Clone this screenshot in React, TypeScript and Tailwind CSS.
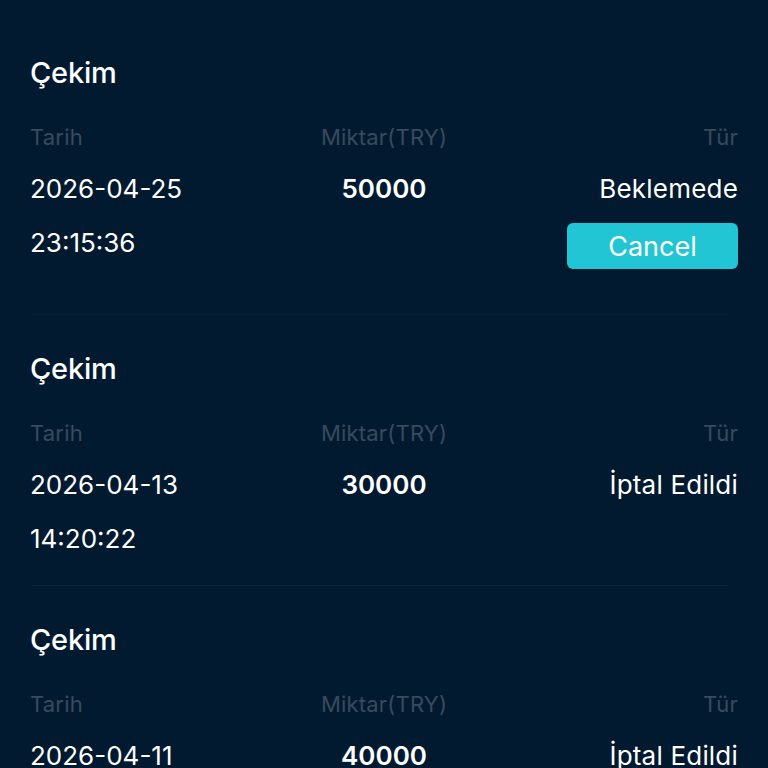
type Item = {
  date: string;
  time: string;
  amount: string;
  status: string;
  cancellable?: boolean;
};

const items: Item[] = [
  { date: '2026-04-25', time: '23:15:36', amount: '50000', status: 'Beklemede', cancellable: true },
  { date: '2026-04-13', time: '14:20:22', amount: '30000', status: 'İptal Edildi' },
  { date: '2026-04-11', time: '09:42:10', amount: '40000', status: 'İptal Edildi' },
];

function WithdrawCard({ item }: { item: Item }) {
  return (
    <div className="pt-[36px]">
      <h2 className="text-[29px] leading-[36px] font-medium text-white tracking-[-0.2px]">Çekim</h2>

      <div className="mt-[31px] grid grid-cols-3 text-[22px] leading-[30px] text-[#384a5d] tracking-[0.2px]">
        <span>Tarih</span>
        <span className="text-center">Miktar(TRY)</span>
        <span className="text-right">Tür</span>
      </div>

      <div className="mt-[21px] grid grid-cols-3 text-[26px] leading-[32px] text-white">
        <div className="flex flex-col gap-[22px]">
          <span>{item.date}</span>
          <span>{item.time}</span>
        </div>
        <span className="text-center font-semibold">{item.amount}</span>
        <div className="flex flex-col items-end">
          <span className="tracking-[0.2px]">{item.status}</span>
          {item.cancellable && (
            <button className="mt-[18px] w-[171px] h-[46px] rounded-[6px] bg-[#22c5d3] text-[27px] leading-none text-white">
              Cancel
            </button>
          )}
        </div>
      </div>

      <div className={item.cancellable ? 'pt-[45px]' : 'pt-[30px]'}>
        <div className={'ml-[2px] mr-[10px] h-px ' + (item.cancellable ? 'bg-[#051d33]' : 'bg-[#0d2438]')} />
      </div>
    </div>
  );
}

export default function App() {
  return (
    <div
      className="min-h-screen h-[768px] overflow-hidden bg-[#021a30] px-[30px] pt-[19px]"
      style={{ fontFamily: 'Inter, "Noto Sans", sans-serif' }}
    >
      {items.map((item, i) => (
        <WithdrawCard key={i} item={item} />
      ))}
    </div>
  );
}
